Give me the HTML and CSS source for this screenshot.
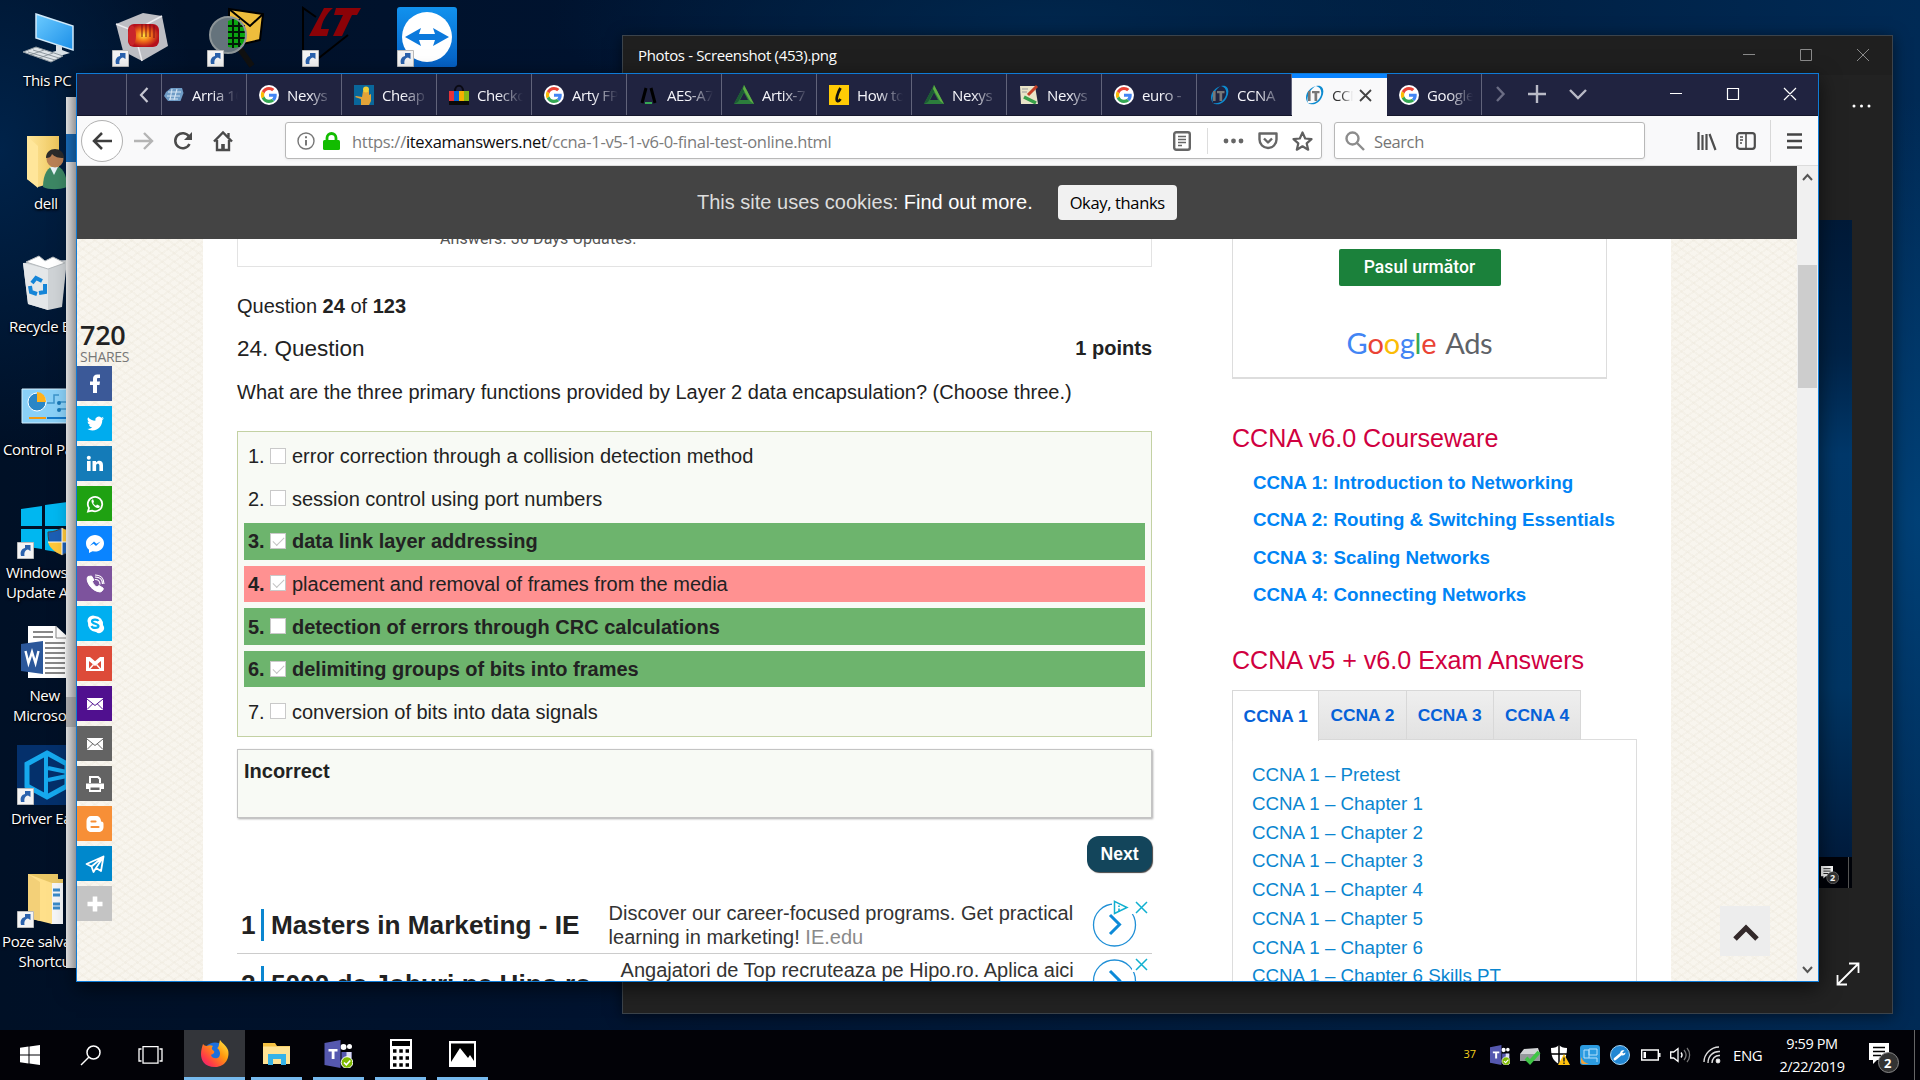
FILE: index.html
```html
<!DOCTYPE html>
<html lang="en">
<head>
<meta charset="utf-8">
<title>CCNA 1 Final Test Online</title>
<link rel="stylesheet" href="styles.css">
</head>
<body>
<svg class="defs" width="0" height="0">
  <defs>
    <linearGradient id="scr" x1="0" y1="0" x2="1" y2="1"><stop offset="0" stop-color="#6ccbff"/><stop offset="1" stop-color="#1b8fe8"/></linearGradient>
    <linearGradient id="fold" x1="0" y1="0" x2="1" y2="0"><stop offset="0" stop-color="#ffe69a"/><stop offset="1" stop-color="#eec65c"/></linearGradient>
    <linearGradient id="tv" x1="0" y1="0" x2="0" y2="1"><stop offset="0" stop-color="#1192ee"/><stop offset="1" stop-color="#0560c4"/></linearGradient>
    <linearGradient id="ff" x1="1" y1="0" x2="0" y2="1"><stop offset="0" stop-color="#fff14a"/><stop offset=".4" stop-color="#ff980e"/><stop offset=".75" stop-color="#ff3b47"/><stop offset="1" stop-color="#e31587"/></linearGradient>
    <radialGradient id="hot"><stop offset="0" stop-color="#ffe23a"/><stop offset=".5" stop-color="#f0701a"/><stop offset="1" stop-color="#b5101c"/></radialGradient>
  </defs>
  <symbol id="g" viewBox="0 0 48 48"><circle cx="24" cy="24" r="24" fill="#fff"/><g transform="translate(4.5 4.5) scale(.81)"><path fill="#EA4335" d="M24 9.5c3.54 0 6.71 1.22 9.21 3.6l6.85-6.85C35.9 2.38 30.47 0 24 0 14.62 0 6.51 5.38 2.56 13.22l7.98 6.19C12.43 13.72 17.74 9.5 24 9.5z"/><path fill="#4285F4" d="M46.98 24.55c0-1.57-.15-3.09-.38-4.55H24v9.02h12.94c-.58 2.96-2.26 5.48-4.78 7.18l7.73 6c4.51-4.18 7.09-10.36 7.09-17.65z"/><path fill="#FBBC05" d="M10.53 28.59c-.48-1.45-.76-2.99-.76-4.59s.27-3.14.76-4.59l-7.98-6.19C.92 16.46 0 20.12 0 24c0 3.88.92 7.54 2.56 10.78l7.97-6.19z"/><path fill="#34A853" d="M24 48c6.48 0 11.93-2.13 15.89-5.81l-7.73-6c-2.15 1.45-4.92 2.3-8.16 2.3-6.26 0-11.57-4.22-13.47-9.91l-7.98 6.19C6.51 42.62 14.62 48 24 48z"/></g></symbol>
  <symbol id="tri" viewBox="0 0 20 20"><path d="M10 0 20 19H0Z" fill="#2c7d3c"/><path d="M10 0 0 19l4-2 7-12z" fill="#1c5a35"/><path d="M10 0l10 19-4-3-7-12z" fill="#5fae45"/><path d="M10 7.5 14 15H6z" fill="#202340"/></symbol>
  <symbol id="it" viewBox="0 0 20 20"><path d="M12 1C19-1 21 6 18 12 15 19 8 21 4 18c8 1 11-3 13-8 1-5-1-8-5-9z" fill="#0d8bd0"/><path d="M12 1C4 3-1 12 4 18 2 12 6 4 12 1z" fill="#0d8bd0"/><path d="M4 6h2.600v10H4zM8 6h7.500v2.300h-2.300V16h-2.700V8.300H8z" fill="#777"/></symbol>
  <symbol id="cut" viewBox="0 0 17 17"><path d="M.5.500h16v16H.5z" fill="#f4f4f4" stroke="#bbb"/><path d="M4 14c-1-4 0-7 4-8V3h5.500v6L11 7.500C8 8 7 11 7.500 14z" fill="#2b62ad"/></symbol>
  <symbol id="teams" viewBox="0 0 28 28"><circle cx="19" cy="7" r="3" fill="#fff"/><circle cx="25" cy="6.500" r="2.500" fill="#fff"/><path d="M17 12h10v8H17z" fill="#5558af"/><path d="M22 12h5v6h-5z" fill="#dcdcf5"/><path d="M0 3 16 0v28L0 25z" fill="#5558af"/><path d="M4 9h9v2.500h-3V19H7.200v-7.500H4z" fill="#fff"/><circle cx="22.500" cy="22.500" r="5.800" fill="#7fba00" stroke="#fff"/><path d="m19.500 22.500 2.300 2.300 4-4.300" fill="none" stroke="#fff" stroke-width="1.600"/></symbol>
  <symbol id="note" viewBox="0 0 30 30"><path d="M0 0h20v17H8l-4 4v-4H0z" fill="#fff"/><path d="M4 4.500h12M4 8.500h12M4 12.500h8" stroke="#000" stroke-width="1.400"/><circle cx="19.500" cy="19.500" r="10" fill="#333" stroke="#888"/></symbol>
  <symbol id="mail" viewBox="0 0 16 12"><path d="M0 0h16v12H0z" fill="#fff"/><path d="m0 1 8 6.500L16 1M0 11.500 5.500 6M16 11.500 10.500 6" fill="none" stroke="currentColor" stroke-width="1"/></symbol>
</svg>

<div class="desktop">
  <div class="shortcut pc"><svg class="pic" viewBox="0 0 53 50"><path d="m14 1 37 12v24L14 25z" fill="url(#scr)" stroke="#cfe9fa" stroke-width="1.500"/><path d="M34 32v6l-8 2 8 4 14-4-8-3v-4z" fill="#d9e0e5"/><path d="m1 39 13-5 27 9-12 6z" fill="#dfe4e8" stroke="#8d979f"/><path d="m6 39 27 8M11 37l26 8M8 42l14-5M17 45l14-5" stroke="#7b858d" stroke-width=".8"/></svg><p>This PC</p></div>
  <div class="shortcut comsol"><svg class="pic" viewBox="0 0 60 60"><path d="m4 17 27-11 19 3 6 30-26 15-19-10z" fill="#bdbec4"/><path d="m4 17 18 7 28-15M22 24l8 30" fill="none" stroke="#ececf0" stroke-width="1.500"/><rect x="16" y="17" width="31" height="23" rx="6" fill="url(#hot)"/><path d="M30 17v13M34 17v13M38 17v13M42 18v13" stroke="#7d0f14"/><ellipse cx="20" cy="28.500" rx="4" ry="10" fill="#c9252b"/></svg><svg class="arrow"><use href="#cut"/></svg></div>
  <div class="shortcut mailfind"><svg class="pic" viewBox="0 0 60 60"><path d="m22 2 34 5-3 26-31 7z" fill="#eebd3c" stroke="#000" stroke-width="2"/><path d="m22 2 21 17L56 7" fill="none" stroke="#000" stroke-width="2"/><path d="m33 42 12 17" stroke="#111" stroke-width="6"/><circle cx="21" cy="28" r="18" fill="#65737c"/><path d="M21 14c12-6 17 2 17 14s-6 14-17 12z" fill="#0aa510"/><path d="M21 19h17M21 25h18M21 31h17M21 37h13M26 12v29M32 12v28" stroke="#021a08" stroke-width="2"/><circle cx="21" cy="28" r="18" fill="none" stroke="#8d9598" stroke-width="2"/></svg><svg class="arrow"><use href="#cut"/></svg></div>
  <div class="shortcut lt"><svg class="pic" viewBox="0 0 60 60"><path d="M1 59V1l13 9M46 28 8 58" fill="none" stroke="#000" stroke-width="2"/><path d="M22 1h9c-7 6-11 14-12 21h8l-2 7H7z" fill="#8b0207"/><path d="M34 1h25l-4 7h-5L40 29h-9l10-21h-9z" fill="#8b0207"/></svg><svg class="arrow"><use href="#cut"/></svg></div>
  <div class="shortcut tviewer"><svg class="pic" viewBox="0 0 60 60"><rect width="60" height="60" rx="3" fill="url(#tv)"/><circle cx="30" cy="30" r="25" fill="#fff"/><path d="m8 30 16-9-2 6h16l-2-6 16 9-16 9 2-6H22l2 6z" fill="#0b79dc"/></svg><svg class="arrow"><use href="#cut"/></svg></div>

  <div class="shortcut user"><svg class="pic" viewBox="0 0 50 55"><path d="M0 1h32v45l-21 6-11-8z" fill="url(#fold)"/><path d="m0 1 11 10v42L0 44z" fill="#ffe69a"/><path d="M16 52c0-13 5-21 12-21s12 8 12 21c-8 3-18 3-24 0z" fill="#3d8764"/><path d="m23 32 4 8 4-8z" fill="#e8f2f8"/><circle cx="28" cy="24" r="8.500" fill="#b98055"/><path d="M19 23c0-12 18-12 18 0-6 0-9-1-12-4-1 3-3 4-6 4z" fill="#2b2b2b"/></svg><p>dell</p></div>
  <div class="shortcut recycle"><svg class="pic" viewBox="0 0 50 54"><path d="m0 7 44-3-5 47-14 3-20-6z" fill="#cfd3d6"/><path d="M0 7 25 13v41L5 48z" fill="#e4e7e9"/><path d="m3 6 13-6 6 5 8-4 12 6-17 6z" fill="#fff" stroke="#b5babd"/><path d="m9 27 4-5 6 3M22 28l0 8-6 1M7 30l1 6 6 2" fill="none" stroke="#1585d8" stroke-width="4"/></svg><p>Recycle Bin</p></div>
  <div class="shortcut control"><svg class="pic" viewBox="0 0 60 36"><path d="M1 1h58v34H1z" fill="#8ad0f7" stroke="#d2efff"/><circle cx="16" cy="14" r="9" fill="#2a86c6" stroke="#fff"/><path d="M16 14V4a9 9 0 0 1 9 10z" fill="#ffb21c"/><path d="M26 15h7V7h5M38 14h20M38 21h20" stroke="#3d94cb" stroke-width="1.500" fill="none"/><circle cx="38" cy="15" r="2" fill="#1878b8"/><circle cx="38" cy="22" r="2" fill="#1878b8"/><path d="M8 30h17" stroke="#f39a10" stroke-width="2"/><path d="M26 30h30" stroke="#1378c8" stroke-width="2"/></svg><p>Control Panel</p></div>
  <div class="shortcut winup"><svg class="pic" viewBox="0 0 60 60"><path d="m4 10 21-3v20H4zM28 6l30-4v25H28zM4 30h21v20L4 47zM28 30h30v26l-30-5z" fill="#00b7f0"/><path d="M31 33c6 0 10-2 14-4 4 2 8 4 14 4 0 12-4 19-14 23-10-4-14-11-14-23z" fill="#1c5fb5" stroke="#444"/><path d="M45 29c4 2 8 4 14 4v10H45z" fill="#ffc83a"/><path d="M31 43h14v13c-8-3-13-8-14-13z" fill="#ffc83a"/><path d="M45 29v27M31 43h28" stroke="#fff"/></svg><svg class="arrow"><use href="#cut"/></svg><p>Windows 10<br>Update As…</p></div>
  <div class="shortcut word"><svg class="pic" viewBox="0 0 50 54"><path d="M7 0h28l12 11v41H7z" fill="#fff"/><path d="M35 0v12h12" fill="none" stroke="#888"/><path d="M12 6h20M12 11h20M24 17h20M24 22h20M24 27h20M24 32h20M24 37h20M24 42h20M24 47h20" stroke="#888" stroke-width="2"/><path d="m0 18 22-3v33L0 45z" fill="#2b579a"/><path d="m4.500 25 3 12L11 26l3.500 11L17.500 25" fill="none" stroke="#fff" stroke-width="2.400"/></svg><p>New<br>Microsoft</p></div>
  <div class="shortcut driver"><svg class="pic" viewBox="0 0 60 60"><path d="M0 0h60v60H0z" fill="#04306b"/><path d="m30 8 20 11v22L30 52 10 41V19z" fill="none" stroke="#16a9ee" stroke-width="5"/><path d="M29 8v44M31 23l19 4M31 35l19-4" stroke="#16a9ee" stroke-width="4"/></svg><svg class="arrow"><use href="#cut"/></svg><p>Driver Easy</p></div>
  <div class="shortcut poze"><svg class="pic" viewBox="0 0 60 60"><path d="M11 6h30v5h5v40H11z" fill="#e9c766"/><path d="M34 15h12v41H34z" fill="#f5f6f8"/><path d="M36 22h7M36 27h7M36 36h7M36 40h7" stroke="#3a8ac8" stroke-width="3"/><path d="m11 6 24 9v41l-24-6z" fill="#ffe08a"/><path d="m11 6 12 8v39l-12-3z" fill="#f3d078"/></svg><svg class="arrow"><use href="#cut"/></svg><p>Poze salvate -<br>Shortcut</p></div>
</div>

<div class="back-window"><i class="bw-top"></i><i class="bw-sel"></i><i class="bw-mid"></i><i class="bw-thumb"></i></div>

<section class="photos">
  <header class="photos-title"><span>Photos - Screenshot (453).png</span>
    <svg width="128" height="14" viewBox="0 0 128 14" fill="none" stroke="#8a8a8a"><path d="M1 6.500h12M58.500 1.500h11v11h-11zM115 1l12 12M127 1l-12 12"/></svg></header>
  <svg class="dots" width="20" height="4"><circle cx="2" cy="2" r="1.500"/><circle cx="9.500" cy="2" r="1.500"/><circle cx="17" cy="2" r="1.500"/></svg>
  <div class="photo"><div class="photo-bar"><svg width="18" height="18"><use href="#note"/></svg><b>2</b></div></div>
  <svg class="expand" width="24" height="24" viewBox="0 0 24 24" fill="none" stroke="#fff" stroke-width="1.800"><path d="M2 22 22 2M13 1.500h9.500V11M1.500 13v9.500H11"/></svg>
</section>

<main class="browser">
  <div class="tabs">
    <div class="tab-prev"><svg width="10" height="16" fill="none" stroke="#c6c7d2" stroke-width="2.200"><path d="M8.500 1 2 8l6.500 7"/></svg></div>
    <div class="tab first"><svg class="fav" viewBox="0 0 20 18"><path d="M2 6 7 2h11l1.500 5-3 8H4L0 10z" fill="#6f9cc6"/><path d="M4 6h13M3 10h13M5 13h9M8 3 6 14M13 3l-3 11" stroke="#d3e4f3" stroke-width="1.100"/></svg><span>Arria 10</span></div>
    <div class="tab"><svg class="fav"><use href="#g"/></svg><span>Nexys</span></div>
    <div class="tab"><svg class="fav" viewBox="0 0 20 20"><path d="M0 0h20v20H0z" fill="#09679b"/><path d="M9 6h6v4l2-1v7l-2 4H7v-6L1 12l1-1 6 1z" fill="#e2a338"/><circle cx="12" cy="4.500" r="3" fill="#f0cf3a"/></svg><span>Cheap</span></div>
    <div class="tab"><svg class="fav" viewBox="0 0 20 20"><path d="M6 6c0-7 8-7 8 0" fill="none" stroke="#0a0a14" stroke-width="2"/><path d="M0 6h5v12H0z" fill="#e53238"/><path d="M5 6h5v12H5z" fill="#0064d2"/><path d="M10 6h5v12h-5z" fill="#f5af02"/><path d="M15 6h5v12h-5z" fill="#86b817"/><path d="M0 16h20v4H0z" fill="#0a0a0a"/></svg><span>Checkout</span></div>
    <div class="tab"><svg class="fav"><use href="#g"/></svg><span>Arty FPGA</span></div>
    <div class="tab"><svg class="fav" viewBox="0 0 20 20"><path d="M7 3 3 18M12 3l4 15" stroke="#000" stroke-width="3"/><path d="M6 17h7v2H6z" fill="#35a853"/></svg><span>AES-A7</span></div>
    <div class="tab"><svg class="fav"><use href="#tri"/></svg><span>Artix-7</span></div>
    <div class="tab"><svg class="fav" viewBox="0 0 20 20"><path d="M0 0h20v20H0z" fill="#ffcb05"/><path d="M11.500 3c-3 5-5 12-3 13 1 .5 2-.5 3-2" fill="none" stroke="#111" stroke-width="2.800"/></svg><span>How to</span></div>
    <div class="tab"><svg class="fav"><use href="#tri"/></svg><span>Nexys</span></div>
    <div class="tab"><svg class="fav" viewBox="0 0 20 20"><path d="M1 1h15l3 18H2z" fill="#e9e4c8"/><path d="m18 1-9 9" stroke="#c33f25" stroke-width="3"/><path d="m5 12 12 6" stroke="#39a04a" stroke-width="3.500"/><path d="M3 4h6M3 7h5" stroke="#999"/></svg><span>Nexys</span></div>
    <div class="tab"><svg class="fav"><use href="#g"/></svg><span>euro -</span></div>
    <div class="tab"><svg class="fav"><use href="#it"/></svg><span>CCNA</span></div>
    <div class="tab active"><svg class="fav"><use href="#it"/></svg><span>CCNA</span><svg class="tab-x" width="13" height="13" stroke="#444" stroke-width="1.800"><path d="m1 1 11 11M12 1 1 12"/></svg></div>
    <div class="tab"><svg class="fav"><use href="#g"/></svg><span>Google</span></div>
    <svg class="tab-tools" width="92" height="20" fill="none" stroke="#b9bac6" stroke-width="2.400"><path d="m2 3 6.500 7L2 17" stroke="#6b6d84"/><path d="M33 10h18M42 1v18"/><path d="m75 6 8 8 8-8"/></svg>
    <svg class="win-ctl" width="128" height="14" fill="none" stroke="#fff" stroke-width="1.200"><path d="M1 6.500h12M58.500 1.500h11v11h-11zM115 1l12 12M127 1l-12 12"/></svg>
  </div>

  <div class="toolbar">
    <div class="back"><svg width="20" height="18" fill="none" stroke="#3d3d3d" stroke-width="2.500"><path d="M20 9H2M10 1 2 9l8 8"/></svg></div>
    <svg class="fwd" width="20" height="18" fill="none" stroke="#b4b4b4" stroke-width="2.400"><path d="M0 9h18M10 1l8 8-8 8"/></svg>
    <svg class="reload" width="20" height="18" fill="none" stroke="#4a4a4a" stroke-width="2.500"><path d="M16 4.500A7.500 7.500 0 1 0 16.500 12"/><path d="M19 0v8h-8z" fill="#4a4a4a" stroke="none"/></svg>
    <svg class="home" width="20" height="20" fill="none" stroke="#4a4a4a" stroke-width="2.400"><path d="m1 10.500 9-9 9 9M4 9v10h12V9M15.500 6V2"/><path d="M8.200 19v-6h3.600v6z" fill="#4a4a4a" stroke="none"/></svg>
    <div class="url">
      <svg width="18" height="18" fill="none" stroke="#777" stroke-width="1.400"><circle cx="9" cy="9" r="8"/><path d="M9 8v5.500M9 4.300v2" stroke-width="2"/></svg>
      <svg class="lock" width="17" height="18"><path d="M4 8V6a4.500 4.500 0 0 1 9 0v2" fill="none" stroke="#12bc00" stroke-width="2.800"/><rect y="8" width="17" height="10" rx="1.500" fill="#12bc00"/></svg>
      <p>https://<b>itexamanswers.net</b>/ccna-1-v5-1-v6-0-final-test-online.html</p>
      <svg class="reader" width="18" height="20" fill="none" stroke="#666"><rect x="1.200" y="1.200" width="15.600" height="17.600" rx="2" stroke-width="2.400"/><path d="M5 5.500h8M5 8.500h8M5 11.500h8M5 14.500h4" stroke-width="1.400"/></svg>
      <i class="sep"></i>
      <svg class="more" width="21" height="6" fill="#666"><circle cx="3" cy="3" r="2.400"/><circle cx="10.500" cy="3" r="2.400"/><circle cx="18" cy="3" r="2.400"/></svg>
      <svg class="pocket" width="20" height="18" fill="none" stroke="#666" stroke-width="2.400"><path d="M1.500 1.500h17v6a8.500 8.500 0 0 1-17 0zM6 6.500l4 4 4-4" stroke-linejoin="round"/></svg>
      <svg class="star" width="21" height="20" fill="none" stroke="#5f5f5f" stroke-width="2.200" stroke-linejoin="round"><path d="m10.500 1.500 2.700 6 6.300.6-4.800 4.300 1.500 6.300-5.700-3.400-5.700 3.400 1.500-6.300L1.500 8.100l6.300-.6z"/></svg>
    </div>
    <div class="search"><svg width="20" height="20" fill="none" stroke="#8c8c8c" stroke-width="2.400"><circle cx="7.500" cy="7.500" r="6"/><path d="m12 12 7 7"/></svg><p>Search</p></div>
    <svg class="lib" width="20" height="18" fill="none" stroke="#4d4d4d" stroke-width="2.200"><path d="M1.500 0v18M5.500 3v15M9.500 2v16M12.500 2l6 16"/></svg>
    <svg class="side" width="20" height="18" fill="none" stroke="#4d4d4d" stroke-width="2.200"><rect x="1.200" y="1.200" width="17.600" height="15.600" rx="2.500"/><path d="M10 1v16M4 5h3M4 8h3M4 11h2" stroke-width="1.600"/></svg>
    <i class="sep"></i>
    <svg class="menu" width="15" height="16" stroke="#444" stroke-width="2.400"><path d="M0 1.500h15M0 8h15M0 14.500h15"/></svg>
  </div>

  <div class="view">
    <div class="page">
      <div class="cookie"><p>This site uses cookies: <b>Find out more.</b></p><button>Okay, thanks</button></div>
      <div class="cols">
        <aside class="share">
          <strong>720</strong><small>SHARES</small>
          <a class="fb"><svg width="20" height="20"><path d="M8 19v-8H5V7.500h3V5c0-3 1.500-4.500 4.300-4.500H15V4h-1.700C12 4 12 4.600 12 5.500v2h3l-.5 3.500H12v8z" fill="#fff"/></svg></a>
          <a class="tw"><svg width="17" height="17" viewBox="0 0 24 24"><path fill="#fff" d="M23.950 4.570a10 10 0 0 1-2.820.770 4.960 4.960 0 0 0 2.160-2.720c-.950.550-2 .950-3.130 1.180a4.920 4.920 0 0 0-8.380 4.480C7.690 8.100 4.070 6.130 1.640 3.160a4.920 4.920 0 0 0 1.520 6.570 4.900 4.900 0 0 1-2.230-.610v.060a4.920 4.920 0 0 0 3.950 4.830 5 5 0 0 1-2.210.080 4.940 4.940 0 0 0 4.600 3.420A9.870 9.870 0 0 1 0 19.540a13.990 13.990 0 0 0 7.550 2.210c9.050 0 14-7.500 14-13.980v-.640a9.940 9.940 0 0 0 2.400-2.560z"/></svg></a>
          <a class="in"><svg width="20" height="20" fill="#fff"><path d="M2 7h3.600v10H2zM7.500 7H11v1.500C13 6 18 6 18 11v6h-3.600v-5.500c0-2.500-3.300-2.300-3.300 0V17H7.500z"/><circle cx="3.800" cy="3.700" r="2"/></svg></a>
          <a class="wa"><svg width="20" height="20" viewBox="0 0 20 20"><path d="M3 17.500 4 14a7.200 7.200 0 1 1 3 2.600z" fill="none" stroke="#fff" stroke-width="1.800"/><path d="M7 5.500c-2 2 2 8.500 6 8.500 2 0 2-2 1.500-2.300L12 10.500l-1 1.200c-1.500-.5-2.300-1.500-2.800-2.700l.8-1L8.300 5.600z" fill="#fff"/></svg></a>
          <a class="ms"><svg width="20" height="20"><path d="M10 1c5 0 9 3.700 9 8.300s-4 8.300-9 8.300l-2.500-.4L4 19v-3.300C2 14.300 1 12 1 9.300 1 4.700 5 1 10 1z" fill="#fff"/><path d="m4.500 12 4.500-4.500 2.500 2.300 4-2.300L11 12 8.600 9.800z" fill="#0a84ff"/></svg></a>
          <a class="vb"><svg width="20" height="20" fill="none" stroke="#fff"><path d="M3 2.500C0 5 5 17 15 18c2 0 4-3 3-4l-4-2.500-2 1.500c-2-1-4-3-4.500-5.500L9 6 6.500 2z" fill="#fff"/><path d="M10 5.500c3 0 5 2 5 5M10 3c5 0 7.500 3 7.500 7M10 1c6 0 9 4 9 9" stroke-width="1.200"/></svg></a>
          <a class="sk"><svg width="20" height="20"><path d="M6 2a5 5 0 0 1 4 0 8 8 0 0 1 8 9 5 5 0 0 1-7 7A8 8 0 0 1 3 9a5 5 0 0 1 3-7z" fill="#fff"/><path d="M13.500 7c-1-2-6.500-2-6.500.5S13.500 9.500 13.500 12s-6 2.500-7 0" fill="none" stroke="#00aff0" stroke-width="2.200"/></svg></a>
          <a class="gm"><svg width="20" height="16"><path d="M1 1h18v14H1z" fill="#fff"/><path d="M4 5v8h12V5l-6 5z" fill="#dd4b39"/><path d="m4 13.500 4.500-5M16 13.500l-4.500-5" stroke="#fff" stroke-width="1.500"/><path d="M5 1h10l-5 4.200z" fill="#dd4b39"/></svg></a>
          <a class="ym"><svg width="16" height="12"><use href="#mail"/></svg></a>
          <a class="em"><svg width="16" height="12"><use href="#mail"/></svg></a>
          <a class="em"><svg width="18" height="18"><path d="M4 8V2h8l2 2v4" fill="none" stroke="#fff" stroke-width="2"/><path d="M0 8.500h18V14h-3v3H3v-3H0z" fill="#fff"/><path d="M4.500 12.500h9V15h-9z" fill="#636363"/></svg></a>
          <a class="bl"><svg width="18" height="18"><path d="M5 1h5c3 0 5 2 5 5.500 2 0 2.500 1 2.500 2.500v3c0 3-2 5-5 5H5.500c-3 0-5-2-5-5V6c0-3 2-5 4.500-5z" fill="#fff"/><path d="M5.500 6.500h4M5.500 12h7" stroke="#f78f37" stroke-width="2.200" stroke-linecap="round"/></svg></a>
          <a class="tg"><svg width="20" height="18" fill="none" stroke="#fff" stroke-width="1.800" stroke-linejoin="round"><path d="M18.500 1.500 1.500 9l5 2.500 2 5.500 2.500-4 5 3zM6.500 11.500l12-10L11 13"/></svg></a>
          <a class="pl"><svg width="16" height="16" stroke="#fff" stroke-width="4.600"><path d="M8 .500v15M.5 8h15"/></svg></a>
        </aside>
        <div class="sheet">
          <article>
            <div class="adcut">Answers. 30 Days Updates.</div>
            <p class="count">Question <b>24</b> of <b>123</b></p>
            <div class="qhead"><h4>24. Question</h4><b>1 points</b></div>
            <p class="ask">What are the three primary functions provided by Layer 2 data encapsulation? (Choose three.)</p>
            <ol class="opts">
              <li><em>1.</em><i></i><span>error correction through a collision detection method</span></li>
              <li><em>2.</em><i></i><span>session control using port numbers</span></li>
              <li class="ok"><em>3.</em><i class="on"></i><span>data link layer addressing</span></li>
              <li class="bad"><em>4.</em><i class="on"></i><span>placement and removal of frames from the media</span></li>
              <li class="ok"><em>5.</em><i></i><span>detection of errors through CRC calculations</span></li>
              <li class="ok"><em>6.</em><i class="on"></i><span>delimiting groups of bits into frames</span></li>
              <li><em>7.</em><i></i><span>conversion of bits into data signals</span></li>
            </ol>
            <div class="result">Incorrect</div>
            <div class="nav"><button>Next</button></div>
            <div class="ads">
              <div class="ad"><em>1</em><h3>Masters in Marketing - IE</h3><p>Discover our career-focused programs. Get practical<br>learning in marketing! <span>IE.edu</span></p>
                <svg width="60" height="52" fill="none"><circle cx="22.500" cy="24" r="21" stroke="#1f8fd6" stroke-width="1.300"/><path d="m18 14 9.500 9.500L18 33" stroke="#0c8ad8" stroke-width="3"/><path d="M20-1h22v14H20z" fill="#fff"/><path d="M22.500.300 35 6.500l-12.500 6z" stroke="#10b0d0" stroke-width="1.500"/><path d="M27 4.500v1.500M27 7.500v3" stroke="#10b0d0" stroke-width="1.600"/><path d="m44 1 11 11M55 1 44 12" stroke="#10b0d0" stroke-width="1.500"/></svg></div>
              <div class="ad two"><em>2</em><h3>5000 de Joburi pe Hipo.ro</h3><p>Angajatori de Top recruteaza pe Hipo.ro. Aplica aici</p>
                <svg width="60" height="52" fill="none"><circle cx="22.500" cy="27" r="21" stroke="#1f8fd6" stroke-width="1.300"/><path d="m18 17 9.500 9.500L18 36" stroke="#0c8ad8" stroke-width="3"/><path d="M40 2h20v16H40z" fill="#fff"/><path d="m44 5 11 11M55 5 44 16" stroke="#10b0d0" stroke-width="1.500"/></svg></div>
            </div>
          </article>
          <aside class="side-col">
            <div class="gad"><div class="pas">Pasul următor</div><div class="glogo"><i class="b">G</i><i class="r">o</i><i class="y">o</i><i class="b">g</i><i class="gr">l</i><i class="r">e</i><span>Ads</span></div></div>
            <h2>CCNA v6.0 Courseware</h2>
            <ul class="course"><li>CCNA 1: Introduction to Networking</li><li>CCNA 2: Routing &amp; Switching Essentials</li><li>CCNA 3: Scaling Networks</li><li>CCNA 4: Connecting Networks</li></ul>
            <h2 class="second">CCNA v5 + v6.0 Exam Answers</h2>
            <div class="ptabs"><b class="cur">CCNA 1</b><b>CCNA 2</b><b>CCNA 3</b><b>CCNA 4</b></div>
            <ul class="panel"><li>CCNA 1 – Pretest</li><li>CCNA 1 – Chapter 1</li><li>CCNA 1 – Chapter 2</li><li>CCNA 1 – Chapter 3</li><li>CCNA 1 – Chapter 4</li><li>CCNA 1 – Chapter 5</li><li>CCNA 1 – Chapter 6</li><li>CCNA 1 – Chapter 6 Skills PT</li></ul>
          </aside>
        </div>
      </div>
      <div class="totop"><svg width="26" height="18" fill="none" stroke="#33292a" stroke-width="5"><path d="M2 15 13 4l11 11"/></svg></div>
    </div>
    <div class="scroll"><svg width="11" height="8" fill="none" stroke="#555" stroke-width="2"><path d="m1 7 4.500-5L10 7"/></svg><i></i><svg class="dn" width="11" height="8" fill="none" stroke="#555" stroke-width="2"><path d="m1 1 4.500 5L10 1"/></svg></div>
  </div>
</main>

<footer class="taskbar">
  <div class="tb"><svg width="20" height="20" viewBox="0 0 20 20" fill="#fff"><path d="M0 2.800 8.500 1.600v8H0zM9.500 1.500 20 0v9.500H9.500zM0 10.500h8.500v8L0 17.200zM9.500 10.500H20V20L9.500 18.600z"/></svg></div>
  <div class="tb"><svg width="21" height="21" fill="none" stroke="#fff" stroke-width="1.500"><circle cx="13.500" cy="7.500" r="6.500"/><path d="M9 12 1 20"/></svg></div>
  <div class="tb"><svg width="25" height="18" fill="none" stroke="#fff" stroke-width="1.300"><path d="M5 .700h15v16.500H5zM3.500 3H1v12h2.500M21.500 3H24v12h-2.500"/></svg></div>
  <div class="tb run act"><svg width="28" height="28" viewBox="0 0 28 28"><circle cx="14" cy="14.500" r="12" fill="#1c6fdc"/><path d="M2 4c1 1 2 2 4 2 2-1 4-1 6 0-2 2-1 4 1 5 1 2-1 3-3 4 1 4 6 4 8 2 2-3 1-7-2-9 2 0 2-5 3-8 2 3 6 5 8 10 2 7-2 17-13 17C3 27 0 20 0 14 0 10 1 7 2 4z" fill="url(#ff)"/></svg></div>
  <div class="tb run"><svg width="28" height="24" viewBox="0 0 28 24"><path d="M0 1h12l2 3h13v18H0z" fill="#f5c242"/><path d="M0 4.500h27V22H0z" fill="#ffe394"/><path d="M5 12h18v11h-5v-6H10v6H5z" fill="#36b3e8"/></svg></div>
  <div class="tb run"><svg width="29" height="28"><use href="#teams"/></svg></div>
  <div class="tb run"><svg width="22" height="30"><path d="M0 0h22v30H0z" fill="#fff"/><path d="M2 2h18v5H2z" fill="#000"/><path d="M3 12h16M3 19h16M3 26h16" stroke="#000" stroke-width="3.500" stroke-dasharray="3.500 2.800"/></svg></div>
  <div class="tb run"><svg width="27" height="26"><path d="M0 0h27v26H0z" fill="#fff"/><path d="M2 2.500h23V20l-4-6-2 3-8-10L2 21z" fill="#000"/></svg></div>
  <div class="tray">
    <b class="temp">37</b>
    <svg class="ic" width="20" height="20"><use href="#teams"/></svg>
    <svg class="ic" width="20" height="20"><path d="m4 4 14-1 2 6v6H0V9z" fill="#d2d4d6"/><path d="M0 9h20v7H0z" fill="#94989b"/><path d="m6 13 4 4 9-10" fill="none" stroke="#3fc545" stroke-width="4"/></svg>
    <svg class="ic" width="20" height="20"><path d="M1 3c4 0 6-1 8-3 2 2 4 3 8 3 0 8-2 13-8 16C3 16 1 11 1 3z" fill="#fff"/><path d="M9 0v19M0 9h18" stroke="#000" stroke-width="1.500"/><path d="m14 9 6 11H8z" fill="#ffc20e"/><path d="M14 12.500v4M14 17.500V19" stroke="#222" stroke-width="1.500"/></svg>
    <svg class="ic" width="20" height="20"><rect width="20" height="20" rx="3" fill="#2c9be0"/><path d="M4 5h5v8H4zM9 4h8v6H9zM9 13h8v4" fill="none" stroke="#b5e0fb" stroke-width="1"/><path d="M1 12c2 4 4 6 8 7H3a2 2 0 0 1-2-2z" fill="#f0a33c"/></svg>
    <svg class="ic" width="20" height="20"><circle cx="10" cy="10" r="9.500" fill="#2287d3" stroke="#a4d3f2"/><path d="m5 14 6-5" stroke="#fff" stroke-width="2.800" stroke-linecap="round"/><path d="M14.500 5.500c-3-1-5 1.500-4 4 1.500 2 5 1 5-2l-2.200 1-1-1z" fill="#fff"/></svg>
    <svg class="bat" width="20" height="12"><path d="M.7 1h16.600v10H.7zM18.800 4v4" fill="none" stroke="#fff" stroke-width="1.400"/><path d="M2.500 3H5v6H2.500z" fill="#fff"/></svg>
    <svg class="vol" width="20" height="16" fill="none" stroke="#fff" stroke-width="1.300"><path d="M.7 5h3L8 1.500v13L3.700 11h-3zM11 5.500c1.300 1.500 1.300 3.500 0 5"/><path d="M14 3c2.500 3 2.500 7 0 10M17 1c3.500 4 3.500 10 0 14" stroke="#777"/></svg>
    <svg class="wifi" width="18" height="18" fill="none" stroke="#ddd" stroke-width="1.400"><path d="M1 16C1 8 8 1 16 1M5 17C5 10 10 5 17 5.500M9 17c0-4 3-8 8-7.500"/><circle cx="15" cy="15" r="1.700" fill="#fff"/></svg>
    <span class="lang">ENG</span>
    <div class="clock">9:59 PM<br>2/22/2019</div>
    <div class="notif"><svg width="30" height="30"><use href="#note"/></svg><b>2</b></div>
    <i class="peek"></i>
  </div>
</footer>
</body>
</html>
```

FILE: styles.css
```css
* { box-sizing: border-box; margin: 0; padding: 0; }
body { position: relative; width: 1920px; height: 1080px; overflow: hidden; font-family: "Open Sans", "Noto Sans", sans-serif; font-size: 15px;
  background: radial-gradient(ellipse 260px 420px at 1920px 520px, #004076, transparent), radial-gradient(ellipse 500px 120px at 1050px 20px, #00264c, transparent), radial-gradient(ellipse 200px 300px at 0 150px, #00234a, transparent), linear-gradient(90deg, #001026, #00132f 30%, #001f42 75%, #002a55); }
ul, ol { list-style: none; }
i, em { font-style: normal; }
svg { display: block; flex: none; overflow: visible; }
button { border: 0; font: inherit; }
.defs { position: absolute; }

/* desktop */
.shortcut { position: absolute; color: #fff; white-space: nowrap; line-height: 20px; letter-spacing: -.35px; text-shadow: 0 1px 3px #000, 1px 1px 2px #000; }
.shortcut .pic { position: absolute; width: 60px; height: 60px; }
.shortcut .arrow { position: absolute; left: 0; top: 43px; width: 17px; height: 17px; }
.shortcut p { position: absolute; }
.pc { left: 22px; top: 13px; } .pc .pic { width: 53px; height: 50px; } .pc p { left: 1px; top: 57px; }
.comsol { left: 112px; top: 7px; }
.mailfind { left: 207px; top: 7px; }
.lt { left: 302px; top: 7px; }
.tviewer { left: 397px; top: 7px; }
.user { left: 27px; top: 135px; } .user .pic { width: 50px; height: 55px; } .user p { left: 7px; top: 58px; }
.recycle { left: 23px; top: 256px; } .recycle .pic { width: 50px; height: 54px; } .recycle p { left: -14px; top: 60px; }
.control { left: 21px; top: 388px; } .control .pic { height: 36px; } .control p { left: -18px; top: 51px; }
.winup { left: 17px; top: 499px; } .winup p { left: -11px; top: 63px; }
.word { left: 21px; top: 626px; } .word .pic { width: 50px; height: 54px; } .word p { left: -8px; top: 59px; text-align: center; }
.driver { left: 17px; top: 745px; } .driver p { left: -6px; top: 63px; }
.poze { left: 17px; top: 868px; } .poze p { left: -15px; top: 63px; text-align: center; }
.back-window { position: absolute; left: 66px; top: 97px; width: 12px; height: 871px; display: flex; flex-direction: column; background: linear-gradient(90deg, #f4f4f4, #cfcfd2); }
.bw-top { height: 37px; } .bw-sel { height: 28px; background: #1a70c0; } .bw-mid { height: 535px; } .bw-thumb { height: 30px; background: #bdbdbf; }

/* photo viewer */
.photos { position: absolute; left: 622px; top: 35px; width: 1271px; height: 979px; background: #222; border: 1px solid #3b434b; box-shadow: 0 2px 14px rgba(0,0,0,.5); color: #fff; }
.photos-title { display: flex; justify-content: space-between; align-items: center; height: 39px; padding: 0 22px 2px 15px; background: #1f1f1f; letter-spacing: -.35px; }
.dots { position: absolute; right: 20px; top: 68px; fill: #fff; }
.photo { position: absolute; left: 1160px; top: 184px; width: 69px; height: 668px; display: flex; align-items: flex-end; background: linear-gradient(#001a38, #002347 20%, #00386a 35%, #003563 70%, #001b3c 96%); }
.photo-bar { position: relative; width: 69px; height: 31px; padding: 9px 0 0 38px; background: #000208; }
.photo-bar::after { content: ""; position: absolute; right: 3px; top: 0; width: 1px; height: 31px; background: #555; }
.photo-bar b { position: absolute; left: 47px; top: 15px; font-size: 9px; line-height: 12px; }
.expand { position: absolute; left: 1213px; top: 926px; }

/* browser */
.browser { position: absolute; left: 76px; top: 73px; width: 1743px; height: 909px; display: flex; flex-direction: column; border: 1px solid #0f7bd6; background: #fff; box-shadow: 0 6px 20px rgba(0,0,0,.6); }
.tabs { display: flex; align-items: stretch; height: 42px; background: #202340; border-bottom: 1px solid #15172c; padding-left: 49px; color: #f5f5fa; }
.tab-prev { width: 36px; border: solid #61637a; border-width: 0 1px; display: flex; align-items: center; justify-content: center; }
.tab { display: flex; align-items: center; width: 95px; padding-left: 12px; border-right: 1px solid #61637a; overflow: hidden; letter-spacing: -.4px; }
.tab.first { width: 85px; padding-left: 2px; }
.fav { width: 20px; height: 20px; margin-right: 8px; }
.tab span { width: 46px; overflow: hidden; white-space: nowrap; -webkit-mask: linear-gradient(90deg, #000 45%, transparent); mask: linear-gradient(90deg, #000 45%, transparent); }
.tab.active { height: 42px; background: #f9f9fa; border-top: 4px solid #0a84ff; padding-bottom: 4px; color: #333; border-right: 0; }
.tab.active span { width: 21px; }
.tab-x { margin-left: 6px; }
.tab-tools { margin: 10px 0 0 13px; }
.win-ctl { margin: 13px 0 0 82px; }
.toolbar { display: flex; align-items: center; height: 50px; background: #f9f9fa; border-bottom: 1px solid #dcdcdc; }
.back { width: 42px; height: 42px; margin-left: 4px; border: 1px solid #b1b1b1; border-radius: 50%; background: #fff; display: flex; align-items: center; justify-content: center; }
.fwd { margin-left: 11px; } .reload { margin-left: 19px; } .home { margin-left: 20px; }
.url, .search { height: 37px; border: 1px solid #b8b8b8; border-radius: 3px; background: #fff; display: flex; align-items: center; font-size: 16.500px; box-shadow: 0 1px 3px rgba(0,0,0,.06); white-space: nowrap; }
.url { width: 1037px; margin-left: 52px; padding-left: 11px; color: #7b7b7b; letter-spacing: -.3px; }
.url b { font-weight: 400; color: #0c0c0d; }
.lock { margin: 0 12px 0 8px; }
.url p { width: 821px; padding-top: 2px; }
.url .sep { width: 1px; height: 26px; background: #ddd; margin: 0 15px 0 16px; }
.pocket { margin-left: 14px; } .star { margin-left: 14px; }
.search { width: 311px; margin-left: 12px; padding-left: 10px; color: #757575; letter-spacing: -.4px; } .search p { margin-left: 9px; padding-top: 2px; }
.lib { margin-left: 52px; } .side { margin-left: 19px; }
.toolbar > .sep { width: 1px; height: 42px; background: #d8d8d8; margin: 0 16px 0 14px; }

.view { flex: 1; display: flex; min-height: 0; }
.page { position: relative; width: 1720px; display: flex; flex-direction: column; overflow: hidden; font-family: "Liberation Sans", Arial, sans-serif; font-size: 20px; color: #222;
  background: repeating-linear-gradient(35deg, rgba(225,218,200,.16) 0 2px, transparent 2px 7px), repeating-linear-gradient(-35deg, rgba(225,218,200,.16) 0 2px, transparent 2px 7px), #f8f5ee; }
.cookie { flex: none; position: relative; z-index: 1; height: 73px; background: #444; color: #ddd; display: flex; align-items: center; padding-left: 620px; }
.cookie b { font-weight: 400; color: #fff; }
.cookie button { margin-left: 25px; width: 119px; height: 35px; border-radius: 4px; background: #f1f1f1; color: #000; font: 16.500px "Open Sans", sans-serif; letter-spacing: -.35px; }
.cols { flex: 1; min-height: 0; display: flex; }
.share { width: 126px; padding-top: 80px; display: flex; flex-direction: column; gap: 5px; font-family: "Open Sans", sans-serif; }
.share strong { font-size: 27px; font-weight: 600; line-height: 32px; padding-left: 3px; margin-bottom: -6px; letter-spacing: -.3px; }
.share small { font-size: 14px; line-height: 14px; color: #777; padding-left: 3px; margin-bottom: -3px; letter-spacing: -.3px; }
.share a { flex: none; width: 35px; height: 35px; display: flex; align-items: center; justify-content: center; padding-left: 1px; }
.fb { background: #3b5998; } .tw { background: #00acee; } .in { background: #147bb8; } .wa { background: #1fa112; } .ms { background: #0a84ff; } .vb { background: #7d539d; } .sk { background: #00aff0; } .gm { background: #dd4b39; } .ym { background: #50108f; color: #50108f; } .em { background: #636363; color: #636363; } .bl { background: #f78f37; } .tg { background: #0088cc; } .pl { background: #c4c4c4; }

.sheet { width: 1468px; background: #fff; padding-left: 34px; display: flex; gap: 80px; }
article { width: 915px; line-height: 24px; }
.adcut { display: flex; align-items: flex-start; height: 28px; border: 1px solid #e3e3e3; border-top: 0; padding-left: 202px; font: 16px/0 Roboto, sans-serif; letter-spacing: .1px; color: #555; }
.count { margin-top: 27px; }
.qhead { margin-top: 16px; height: 30px; display: flex; align-items: center; justify-content: space-between; }
.qhead b { padding-bottom: 2px; }
.qhead h4 { font-size: 22.500px; font-weight: 400; }
.ask { margin-top: 16px; white-space: nowrap; letter-spacing: .01px; }
.opts { margin-top: 27px; height: 306px; padding: 6px; border: 1px solid #c3d1a3; background: #f8faf5; display: flex; flex-direction: column; justify-content: space-between; }
.opts li { height: 36.600px; display: flex; align-items: center; padding-left: 4px; }
.opts em { width: 16.700px; }
.opts i { width: 16px; height: 16px; margin: -1px 6px 0 5.300px; border: 1px solid #c9c9c9; background: #fff; }
.opts .on::after { content: ""; display: block; width: 10px; height: 5px; margin: 3px 0 0 2px; border: solid #c4c4c4; border-width: 0 0 1.500px 1.500px; transform: rotate(-45deg); }
.ok { background: #6db46d; font-weight: 700; }
.bad { background: #ff9191; } .bad em { font-weight: 700; }
.result { margin-top: 12px; height: 69px; padding: 9px 6px; border: 1px solid #c4c4c4; background: #f8faf5; box-shadow: 1px 1px 2px #aaa; font-weight: 700; }
.nav { margin-top: 18px; display: flex; justify-content: flex-end; }
.nav button { width: 65px; height: 36px; margin-bottom: 1px; padding-bottom: 1px; border-radius: 12px; background: #13455b; color: #fff; font-weight: 700; font-size: 17.600px; box-shadow: 1px 1px 1px #444; }
.ads { margin-top: 28px; color: #333; }
.ad { display: flex; height: 53px; border-bottom: 1px solid #ccc; white-space: nowrap; }
.ad em, .ad h3 { font: 700 26.200px/32px "Liberation Sans", sans-serif; color: #222; margin-top: 8px; }
.ad em { width: 27px; padding-left: 4px; border-right: 3px solid #0a86d0; height: 32px; }
.ad h3 { width: 345px; padding-left: 7px; }
.ad p { width: 484px; }
.ad p span { color: #8a8a8a; }
.two { border: 0; } .two p { padding: 4px 0 0 12px; } .two em, .two h3 { margin-top: 12px; padding-top: 2px; }

.side-col { width: 410px; }
.gad { width: 375px; height: 140px; border: 1px solid #ddd; border-width: 0 1px 2px; display: flex; flex-direction: column; align-items: center; padding-top: 10px; }
.pas { width: 162px; height: 37px; border-radius: 2px; background: #1b813b; color: #fff; text-align: center; font: 500 17.500px/37px Roboto, sans-serif; letter-spacing: .1px; }
.glogo { margin-top: 39px; display: flex; font: 29px/36px Lato, sans-serif; letter-spacing: -.3px; }
.glogo span { margin-left: 9px; color: #5f6368; }
.b { color: #4285f4; } .r { color: #ea4335; } .y { color: #fbbc05; } .gr { color: #34a853; }
.side-col h2 { margin-top: 43px; font-size: 25.100px; font-weight: 400; line-height: 32px; color: #d00040; white-space: nowrap; }
.course { margin: 10px 0 0 21px; font-size: 18.750px; font-weight: 700; line-height: 37.300px; color: #0084f5; white-space: nowrap; }
.side-col .second { margin-top: 31px; }
.ptabs { display: flex; margin-top: 14px; height: 50px; position: relative; z-index: 1; font-size: 17.400px; color: #0661d8; }
.ptabs b { width: 87.300px; display: flex; align-items: center; justify-content: center; border: 1px solid #d8d8d8; border-left-width: 0; background: linear-gradient(#efefef, #e2e2e2); }
.ptabs .cur { background: #fff; border-left-width: 1px; border-bottom: 0; height: 51px; }
.panel { margin-top: -1px; width: 405px; height: 300px; border: 1px solid #ddd; padding: 21px 0 0 19px; font-size: 18.750px; line-height: 28.750px; color: #0a86d0; }
.totop { position: absolute; left: 1643px; top: 740px; width: 50px; height: 50px; padding: 3px 0 0 1px; background: #ededed; display: flex; align-items: center; justify-content: center; }
.scroll { width: 21px; background: #f0f0f0; display: flex; flex-direction: column; align-items: center; padding: 7px 0; }
.scroll i { width: 19px; height: 123px; margin-top: 84px; background: #cdcdcd; }
.dn { margin-top: auto; }

/* taskbar */
.taskbar { position: absolute; left: 0; top: 1030px; width: 1920px; height: 50px; display: flex; background: #020207; color: #fff; }
.tb { width: 60px; display: flex; align-items: center; justify-content: center; }
.tb.run { width: 51px; margin-left: 11px; border-bottom: 3px solid #76b9ed; }
.tb.run.act { width: 61px; margin-left: 4px; margin-right: -5px; background: #33353a; }
.tray { margin-left: auto; display: flex; align-items: center; }
.temp { font-size: 11px; font-weight: 400; color: #f5d21c; margin: -4px 14px 0 0; }
.ic { margin-right: 10px; } .bat { margin-left: 1px; } .vol { margin-left: 9px; } .wifi { margin-left: 13px; }
.lang { margin-left: 12px; width: 44px; letter-spacing: -.4px; }
.clock { width: 70px; text-align: center; line-height: 23px; font-size: 14.500px; letter-spacing: -.4px; white-space: nowrap; }
.notif { position: relative; margin-left: 22px; padding-top: 6px; }
.notif b { position: absolute; left: 15px; top: 17px; font-size: 13px; line-height: 18px; }
.peek { width: 1px; height: 50px; margin: 0 5px 0 15px; background: #666; }
```
